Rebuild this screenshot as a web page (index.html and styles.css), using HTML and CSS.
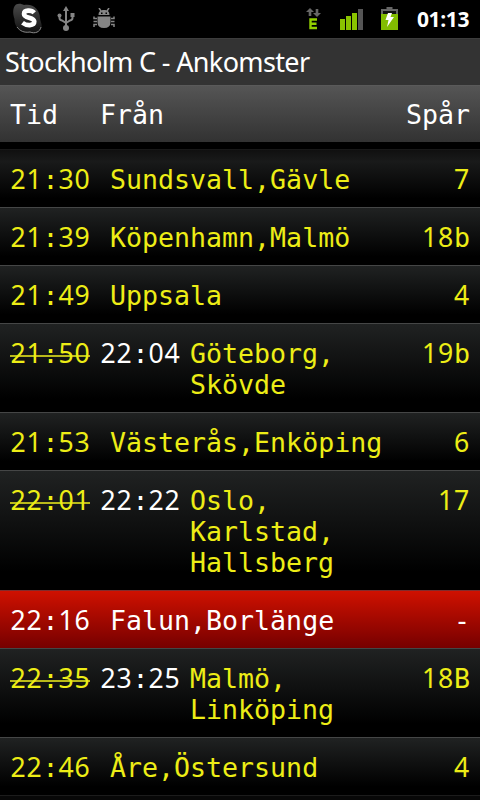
FILE: index.html
```html
<!DOCTYPE html>
<html lang="sv">
<head>
<meta charset="utf-8">
<title>Stockholm C - Ankomster</title>
<link rel="stylesheet" href="styles.css">
</head>
<body>
<div class="statusbar">
  <svg class="ico-skype" width="30" height="32" viewBox="0 0 30 32">
    <defs><linearGradient id="sk" x1="0" y1="0" x2="0" y2="1"><stop offset="0" stop-color="#4a4a4a"/><stop offset="1" stop-color="#111"/></linearGradient></defs>
    <path d="M3 1.500C6 0 9 1 11 2C20 0 27 7 27 15C27 18 30 22 28 26C26 30 21 31 17 29C8 31 1 24 1.500 16C0 12-1 5 3 1.500Z" fill="url(#sk)"/>
    <path d="M4 24C7 28 11 30 17 29C22 31 27 29 28 24" fill="none" stroke="#888" stroke-width="1"/>
    <path d="M21.300 9.800C18.500 6.800 11 6.700 11 11C11 15.800 21.300 13.600 21.300 18.600C21.300 23.200 13.500 23 9.500 19.800" fill="none" stroke="#fff" stroke-width="4.600"/>
  </svg>
  <svg class="ico-usb" width="18" height="26" viewBox="0 0 18 26" fill="#858585">
    <path d="M9 0L12 5H6Z"/><circle cx="9" cy="22" r="3"/><circle cx="2.500" cy="9.500" r="2"/><rect x="13.500" y="7" width="4" height="4"/>
    <path d="M9 4V21M2.500 9V12Q2.500 14 5 14.500L9 17M15.500 9V12Q15.500 14 13 14.500L9 17" fill="none" stroke="#858585" stroke-width="2"/>
  </svg>
  <svg class="ico-bug" width="22" height="22" viewBox="0 0 22 22" fill="#858585">
    <path d="M5.500 7C5.500 3 8 2 11 2S16.500 3 16.500 7ZM4.500 8.500H17.500V14Q17.500 20 11 20Q4.500 20 4.500 14Z"/>
    <path d="M6 0L8 3M16 0L14 3M4 10.500H1V8.500M4 13.500H0.500M4 16.500H1V19M18 10.500H21V8.500M18 13.500H21.500M18 16.500H21V19" fill="none" stroke="#858585" stroke-width="1.500"/>
    <path d="M8 4.500h1.500v1.500H8zM12.500 4.500H14v1.500h-1.500z" fill="#000"/>
  </svg>
  <svg class="ico-edge" width="16" height="22" viewBox="0 0 16 22">
    <path d="M4 0L8 4H5.300V8H2.700V4H0ZM11 9L15 5H12.300V1H9.700V5H7Z" fill="#666"/>
    <path d="M11 11.500H4.500V20H11M4.500 15.700H10.500" fill="none" stroke="#92d000" stroke-width="2.400"/>
  </svg>
  <svg class="ico-signal" width="24" height="22" viewBox="0 0 24 22" fill="#8ac400">
    <rect x="0" y="10" width="5" height="11"/><rect x="6" y="7" width="5" height="14"/><rect x="12" y="4" width="5" height="17"/><rect x="18" y="0" width="5" height="21" fill="#555"/>
  </svg>
  <svg class="ico-battery" width="18" height="24" viewBox="0 0 18 24">
    <path d="M5.500 0H11.500V2H17V23H0V2H5.500Z" fill="#666"/><path d="M2 4H15V7H2Z" fill="#111"/><rect x="0" y="7" width="17" height="16" fill="#82bd00"/>
    <path d="M7 6H11L9.500 10H13L6 20L7.500 13H4.500Z" fill="#fff"/>
  </svg>
  <span class="clock">01:13</span>
</div>
<div class="titlebar"><span>Stockholm C - Ankomster</span></div>
<div class="row header"><span class="tid">Tid</span><span class="fran">Från</span><span class="track">Spår</span></div>
<div class="list">
  <div class="row first"><span class="time num">21<i>:</i>30</span><span class="from">Sundsvall,Gävle</span><span class="track num">7</span></div>
  <div class="row"><span class="time num">21<i>:</i>39</span><span class="from">Köpenhamn,Malmö</span><span class="track num">18<i>b</i></span></div>
  <div class="row"><span class="time num">21<i>:</i>49</span><span class="from">Uppsala</span><span class="track num">4</span></div>
  <div class="row"><span class="time num late">21<i>:</i>50</span><span class="new num">22<i>:</i>04</span><span class="from via">Göteborg,<br>Skövde</span><span class="track num">19<i>b</i></span></div>
  <div class="row"><span class="time num">21<i>:</i>53</span><span class="from">Västerås,Enköping</span><span class="track num">6</span></div>
  <div class="row"><span class="time num late">22<i>:</i>01</span><span class="new num">22<i>:</i>22</span><span class="from via">Oslo,<br>Karlstad,<br>Hallsberg</span><span class="track num">17</span></div>
  <div class="row cancelled"><span class="time num">22<i>:</i>16</span><span class="from">Falun,Borlänge</span><span class="track">-</span></div>
  <div class="row"><span class="time num late">22<i>:</i>35</span><span class="new num">23<i>:</i>25</span><span class="from via">Malmö,<br>Linköping</span><span class="track num">18<i>B</i></span></div>
  <div class="row"><span class="time num">22<i>:</i>46</span><span class="from">Åre,Östersund</span><span class="track num">4</span></div>
  <div class="row next"></div>
</div>
</body>
</html>
```

FILE: styles.css
```css
* { box-sizing: border-box; }
body { margin: 0; width: 480px; height: 800px; overflow: hidden; display: flex; flex-direction: column; background: #000; color: #fff; font-family: "Noto Sans", sans-serif; }
.statusbar { height: 38px; flex: none; display: flex; align-items: flex-start; padding: 0 9px 0 13px; }
.statusbar svg { flex: none; display: block; }
.ico-skype { margin-top: 3px; }
.ico-usb { margin: 6px 0 0 14px; }
.ico-bug { margin: 8px 0 0 18px; }
.ico-edge { margin: 8px 0 0 auto; }
.ico-signal { margin: 9px 0 0 18px; }
.ico-battery { margin: 7px 0 0 17px; }
.clock { margin-left: 18px; width: 54px; font: bold 21px/38px "Open Sans", sans-serif; white-space: nowrap; letter-spacing: -0.4px; }
.titlebar { height: 47px; flex: none; background: #333; border-top: 1px solid #3c3c3c; padding-left: 5px; font-size: 27px; line-height: 46px; letter-spacing: -0.65px; white-space: nowrap; }
.row { display: flex; align-items: flex-start; padding: 14px 10px 12px; border-top: 1px solid #454646; background: linear-gradient(#202222, #000 85%); color: #eded16; font: 26.6px/31px "DejaVu Sans Mono", monospace; white-space: nowrap; }
.header { height: 57px; flex: none; padding-top: 13px; background: linear-gradient(#555, #323232); border-top: 1px solid #5a5a5a; color: #fff; }
.tid { width: 90px; }
.num { font-family: "Noto Sans", sans-serif; font-size: 26.6px; letter-spacing: 0.8px; }
.num i { font-family: "DejaVu Sans Mono", monospace; font-style: normal; letter-spacing: 0; }
.time { width: 80px; flex: none; text-indent: 0.5px; }
.late { background: linear-gradient(#b9b91a, #b9b91a) 0 17px / 80px 2px no-repeat; }
.new { width: 80px; margin-left: 10px; color: #fff; text-indent: 0.5px; }
.from { margin-left: 20px; }
.via { margin-left: 10px; }
.track { margin-left: auto; }
.list { flex: 1; overflow: hidden; padding-top: 7px; }
.first { border-top-color: #181818; background: linear-gradient(#101010, #191a1a 20%, #000 85%); }
.cancelled { background: linear-gradient(#cf1100, #760000); border-top-color: #802b2b; color: #fff; }
.next { border-top-color: #1c1c1c; background: #080808; }
```
